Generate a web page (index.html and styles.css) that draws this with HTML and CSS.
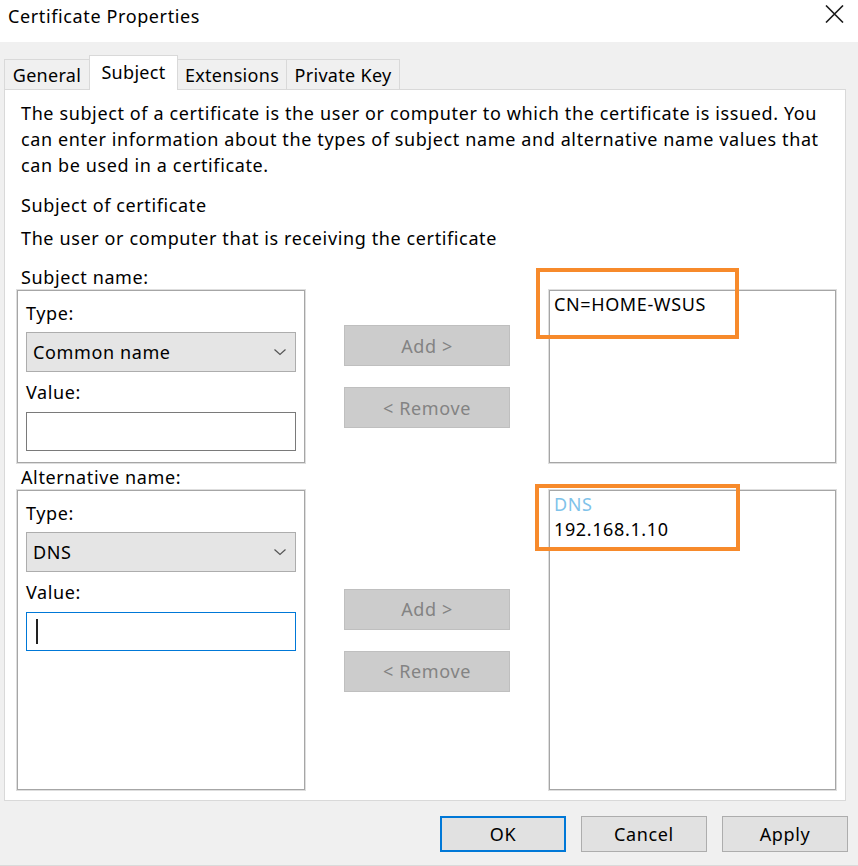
FILE: index.html
```html
<!DOCTYPE html>
<html>
<head>
<meta charset="utf-8">
<link rel="stylesheet" href="styles.css">
</head>
<body>
<div class="window">
  <div class="titlebar">
    <span class="title">Certificate Properties</span>
    <svg class="close" width="19" height="18" viewBox="0 0 19 18"><path d="M1 0.5 L18 17.5 M18 0.5 L1 17.5" stroke="#1a1a1a" stroke-width="1.6" fill="none"/></svg>
  </div>
  <div class="tabstrip">
    <div class="tab tab-general">General</div>
    <div class="tab tab-subject active">Subject</div>
    <div class="tab tab-ext">Extensions</div>
    <div class="tab tab-key">Private Key</div>
  </div>
  <div class="panel">
    <p class="intro">The subject of a certificate is the user or computer to which the certificate is issued. You<br>can enter information about the types of subject name and alternative name values that<br>can be used in a certificate.</p>
    <div class="heading">Subject of certificate</div>
    <div class="sub">The user or computer that is receiving the certificate</div>
    <div class="grid">
      <div class="label label-subject">Subject name:</div>
      <div class="groupbox gb1">
        <div class="field-label">Type:</div>
        <div class="combo"><span>Common name</span><svg width="14" height="8" viewBox="0 0 14 8"><path d="M1.5 1.5 L7 6.5 L12.5 1.5" stroke="#555" stroke-width="1.2" fill="none"/></svg></div>
        <div class="field-label gap">Value:</div>
        <div class="input"></div>
      </div>
      <div class="btncol r2">
        <div class="btn-disabled">Add &gt;</div>
        <div class="btn-disabled">&lt; Remove</div>
      </div>
      <div class="listbox r2">
        <div class="item">CN=HOME-WSUS</div>
        <div class="highlight hl1"></div>
      </div>
      <div class="label label-alt">Alternative name:</div>
      <div class="groupbox gb2">
        <div class="field-label">Type:</div>
        <div class="combo"><span>DNS</span><svg width="14" height="8" viewBox="0 0 14 8"><path d="M1.5 1.5 L7 6.5 L12.5 1.5" stroke="#555" stroke-width="1.2" fill="none"/></svg></div>
        <div class="field-label gap">Value:</div>
        <div class="input focused"><span class="caret"></span></div>
      </div>
      <div class="btncol r4">
        <div class="btn-disabled">Add &gt;</div>
        <div class="btn-disabled">&lt; Remove</div>
      </div>
      <div class="listbox r4">
        <div class="item dns">DNS</div>
        <div class="item">192.168.1.10</div>
        <div class="highlight hl2"></div>
      </div>
    </div>
  </div>
  <div class="footer">
    <div class="btn default">OK</div>
    <div class="btn">Cancel</div>
    <div class="btn">Apply</div>
  </div>
</div>
</body>
</html>
```

FILE: styles.css
```css
html, body {
  margin: 0;
  padding: 0;
}
body {
  width: 858px;
  height: 866px;
  overflow: hidden;
  background: #f0f0f0;
  font-family: "Noto Sans", "Open Sans", sans-serif;
  font-size: 18px;
  letter-spacing: 0.62px;
  color: #000;
}
.window {
  width: 858px;
  height: 866px;
  box-sizing: border-box;
  border-bottom: 1px solid #dadada;
}
.titlebar {
  height: 42px;
  background: #fff;
  display: flex;
  justify-content: space-between;
  align-items: flex-start;
  padding: 0 14px 0 8px;
}
.title {
  line-height: 24px;
  margin-top: 4px;
}
.close {
  margin-top: 5px;
}
.tabstrip {
  height: 47px;
  display: flex;
  align-items: flex-end;
  padding-left: 4px;
}
.tab {
  box-sizing: border-box;
  height: 30px;
  border: 1px solid #d9d9d9;
  border-bottom: none;
  background: #f0f0f0;
  display: flex;
  align-items: center;
  justify-content: center;
  margin-left: -1px;
  letter-spacing: 0.3px;
}
.tab-general { width: 86px; margin-left: 0; }
.tab-subject { width: 89px; }
.tab-ext { width: 110px; }
.tab-key { width: 114px; }
.tab.active {
  height: 35px;
  margin-bottom: -1px;
  background: #fff;
  position: relative;
  z-index: 1;
  padding-bottom: 3px;
}
.panel {
  box-sizing: border-box;
  margin-left: 4px;
  width: 842px;
  height: 712px;
  background: #fff;
  border: 1px solid #d9d9d9;
  padding: 10px 9px 0 12px;
}
.intro {
  margin: 0;
  padding-left: 4px;
  line-height: 26px;
  white-space: nowrap;
}
.heading {
  margin-top: 14px;
  padding-left: 4px;
  line-height: 26px;
}
.sub {
  margin-top: 7px;
  padding-left: 4px;
  line-height: 26px;
}
.grid {
  margin-top: 14px;
  display: grid;
  grid-template-columns: 288px 1fr 287px;
  grid-template-rows: 25px 173px 27px 300px;
}
.label {
  grid-column: 1;
  padding-left: 4px;
  line-height: 25px;
}
.label-subject { grid-row: 1; }
.label-alt { grid-row: 3; padding-top: 2px; }
.groupbox {
  grid-column: 1;
  box-sizing: border-box;
  border: 1px solid #a6a6a6;
  box-shadow: 0 0 0 1px #dedede;
  padding: 9px 8px 0 8px;
}
.gb1 { grid-row: 2; }
.gb2 { grid-row: 4; }
.field-label {
  line-height: 26px;
}
.field-label.gap {
  margin-top: 7px;
}
.combo {
  margin-top: 6px;
  box-sizing: border-box;
  height: 40px;
  background: #e5e5e5;
  border: 1px solid #adadad;
  display: flex;
  align-items: center;
  justify-content: space-between;
  padding: 0 8px 0 6px;
}
.input {
  margin-top: 7px;
  box-sizing: border-box;
  height: 39px;
  border: 1px solid #7a7a7a;
  background: #fff;
  display: flex;
  align-items: center;
  padding-left: 9px;
}
.input.focused {
  border-color: #0078d7;
}
.caret {
  width: 2px;
  height: 25px;
  background: #222;
}
.btncol {
  grid-column: 2;
  display: flex;
  flex-direction: column;
  align-items: center;
  justify-content: center;
  gap: 21px;
}
.btncol.r2 { grid-row: 2; }
.btncol.r4 { grid-row: 4; }
.btn-disabled {
  box-sizing: border-box;
  width: 166px;
  height: 41px;
  background: #cccccc;
  border: 1px solid #bfbfbf;
  color: #838383;
  display: flex;
  align-items: center;
  justify-content: center;
}
.listbox {
  grid-column: 3;
  box-sizing: border-box;
  border: 1px solid #a6a6a6;
  box-shadow: 0 0 0 1px #dedede;
  position: relative;
  padding: 1px 4px 0 4px;
  line-height: 25px;
}
.listbox.r2 { grid-row: 2; }
.listbox.r4 { grid-row: 4; }
.item.dns {
  color: #7fc3ea;
}
.highlight {
  position: absolute;
  border: 4px solid #f78a2b;
  box-sizing: border-box;
}
.hl1 {
  left: -14px;
  top: -23px;
  width: 203px;
  height: 71px;
}
.hl2 {
  left: -15px;
  top: -7px;
  width: 205px;
  height: 67px;
}
.footer {
  display: flex;
  justify-content: flex-end;
  gap: 15px;
  padding: 15px 10px 0 0;
}
.btn {
  box-sizing: border-box;
  width: 126px;
  height: 36px;
  background: #e1e1e1;
  border: 1px solid #adadad;
  display: flex;
  align-items: center;
  justify-content: center;
}
.btn.default {
  border: 2px solid #0078d7;
}
```
